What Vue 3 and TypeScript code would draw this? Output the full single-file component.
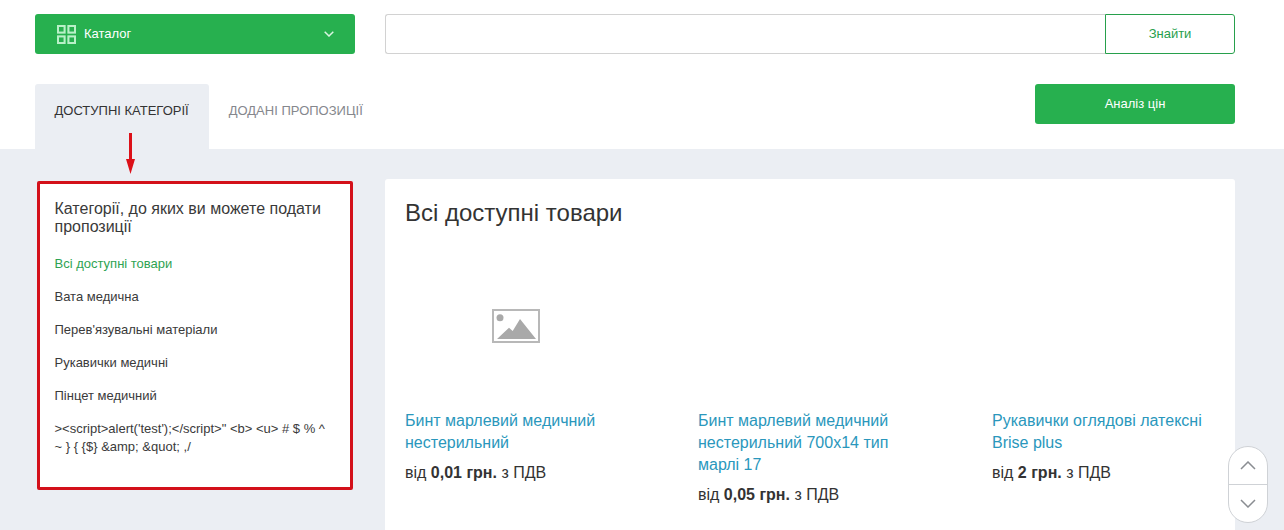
<script setup lang="ts">
interface Product { title: string; price: string }
const categories: string[] = ['Вата медична', "Перев'язувальні матеріали", 'Рукавички медичні', 'Пінцет медичний']
const products: Product[] = [
  { title: 'Бинт марлевий медичний нестерильний', price: '0,01 грн.' },
  { title: 'Бинт марлевий медичний нестерильний 700х14 тип марлі 17', price: '0,05 грн.' },
  { title: 'Рукавички оглядові латексні Brise plus', price: '2 грн.' }
]
const scriptText = `><script>alert('test');<\/script>" <b> <u> # $ % ^ ~ } { {$} &amp; &quot; ,/`
</script>

<template>
  <div class="page">
    <header class="head">
      <div class="top">
        <button class="catalog">
          <svg class="grid" width="19" height="19" viewBox="0 0 20 20" fill="none" stroke="#b9f0c8" stroke-width="2.200">
            <rect x="1" y="1" width="7" height="7" />
            <rect x="12" y="1" width="7" height="7" />
            <rect x="1" y="12" width="7" height="7" />
            <rect x="12" y="12" width="7" height="7" />
          </svg>
          <span class="catalog-label">Каталог</span>
          <svg class="chev" width="10" height="6" viewBox="0 0 10 6" fill="none" stroke="#d9f5e1" stroke-width="1.5">
            <path d="M.7.7 5 5 9.3.7" />
          </svg>
        </button>
        <div class="search">
          <div class="search-input"></div>
          <button class="search-btn">Знайти</button>
        </div>
      </div>
      <div class="tabs-row">
        <div class="tab active">ДОСТУПНІ КАТЕГОРІЇ</div>
        <div class="tab">ДОДАНІ ПРОПОЗИЦІЇ</div>
        <button class="analysis">Аналіз цін</button>
      </div>
    </header>
    <main class="body">
      <svg class="arrow" width="9" height="41" viewBox="0 0 9 41">
        <path d="M3 0h3v26h3L4.500 41 0 26h3z" fill="#dc1018" />
      </svg>
      <aside class="side">
        <h2 class="side-title">Категорії, до яких ви можете подати пропозиції</h2>
        <ul class="cats">
          <li class="current">Всі доступні товари</li>
          <li v-for="c in categories" :key="c">{{ c }}</li>
          <li>{{ scriptText }}</li>
        </ul>
      </aside>
      <section class="main">
        <h1 class="main-title">Всі доступні товари</h1>
        <div class="products">
          <article v-for="(p, i) in products" :key="p.title" class="product">
            <div class="thumb">
              <svg v-if="i === 0" width="48" height="34" viewBox="0 0 48 34">
                <rect x="1" y="1" width="46" height="32" fill="#fff" stroke="#b8b8b8" stroke-width="2" />
                <circle cx="8" cy="8.700" r="3.500" fill="#a9a9a9" />
                <path d="M5 30 L17 18.700 L20.700 22 L28 10 L44 30 Z" fill="#a9a9a9" />
              </svg>
            </div>
            <a class="title">{{ p.title }}</a>
            <p class="price">від <b>{{ p.price }}</b> з ПДВ</p>
          </article>
        </div>
      </section>
    </main>
    <div class="scroller">
      <div class="scroll-part">
        <svg width="16" height="9" viewBox="0 0 16 9" fill="none" stroke="#8a8d92" stroke-width="1.500"><path d="M1 8l7-7 7 7" /></svg>
      </div>
      <div class="scroll-part second">
        <svg width="16" height="9" viewBox="0 0 16 9" fill="none" stroke="#8a8d92" stroke-width="1.500"><path d="M1 1l7 7 7-7" /></svg>
      </div>
    </div>
  </div>
</template>

<style>
html, body { margin: 0; height: 530px; overflow: hidden; background: #fff; }
</style>

<style scoped>
.page {
  position: relative;
  height: 530px;
  overflow: hidden;
  font-family: "Liberation Sans", Arial, sans-serif;
  color: #333;
  background: #ebeef3;
}
.head { background: #fff; padding: 14px 49px 0 35px; height: 149px; box-sizing: border-box; }
.top { display: flex; gap: 30px; height: 40px; }
button { font-family: inherit; border: none; cursor: pointer; }
.catalog {
  width: 320px; display: flex; align-items: center; padding: 0 21px 0 22px;
  background: #27b04f; color: #fff; border-radius: 3px; font-size: 13px;
}
.catalog-label { margin-left: 8px; margin-bottom: 2px; flex: 1; text-align: left; }
.search { flex: 1; display: flex; }
.search-input { flex: 1; border: 1px solid #d2d2d2; border-right: none; border-radius: 3px 0 0 3px; }
.search-btn {
  width: 130px; background: #fff; border: 1px solid #27a04c; border-radius: 0 3px 3px 0;
  color: #27a04c; font-size: 13px; padding: 0 0 2px;
}
.tabs-row { display: flex; margin-top: 30px; align-items: flex-start; }
.tab {
  height: 65px; padding: 0 20px 12px 19.500px; display: flex; align-items: center; box-sizing: border-box;
  font-size: 13px; color: #85878d; border-radius: 3px 3px 0 0;
}
.tab.active { background: #ebeef3; color: #333; padding-right: 20.500px; }
.analysis {
  margin-left: auto; width: 200px; height: 40px; background: #27b04f; color: #fff;
  border-radius: 3px; font-size: 13px; padding: 0 0 1px;
}
.body { position: relative; display: flex; gap: 30px; padding: 30px 49px 0 35px; align-items: flex-start; }
.arrow { position: absolute; left: 126px; top: -16px; }
.side {
  width: 316px; height: 309px; margin: 2px 2px 0; box-sizing: border-box; background: #fff;
  border: 3px solid #d3101a; border-radius: 2px;
  padding: 16px 22px 0 14.500px;
}
.side-title { margin: 0; font-size: 16px; line-height: 18px; font-weight: 400; color: #3a3a3a; }
.cats { list-style: none; margin: 19px 0 0; padding: 0; font-size: 13px; line-height: 18px; color: #3a3a3a; }
.cats li { margin-bottom: 15px; }
.cats .current { color: #2ea352; }
.main { flex: 1; background: #fff; border-radius: 3px; padding: 20px; height: 400px; box-sizing: border-box; }
.main-title { margin: 0; font-size: 24px; line-height: 28px; font-weight: 400; color: #333; }
.products { display: grid; grid-template-columns: 293px 294px 1fr; margin-top: 20px; }
.product { padding-right: 80px; }
.product:last-child { padding-right: 0; }
.thumb { height: 163px; display: flex; align-items: center; justify-content: center; padding-bottom: 6px; box-sizing: border-box; width: 222px; }
.title { display: block; font-size: 16px; line-height: 22px; color: #2a97bc; }
.price { margin: 8px 0 0; font-size: 16px; line-height: 21px; color: #333; }
.scroller {
  position: absolute; left: 1228px; top: 446px; width: 40px; height: 77px; box-sizing: border-box;
  border: 1px solid #cfd2d6; border-radius: 20px; background: #fff; display: flex; flex-direction: column;
}
.scroll-part { flex: 1; display: flex; align-items: center; justify-content: center; }
.scroll-part.second { border-top: 1px solid #cfd2d6; }
</style>
